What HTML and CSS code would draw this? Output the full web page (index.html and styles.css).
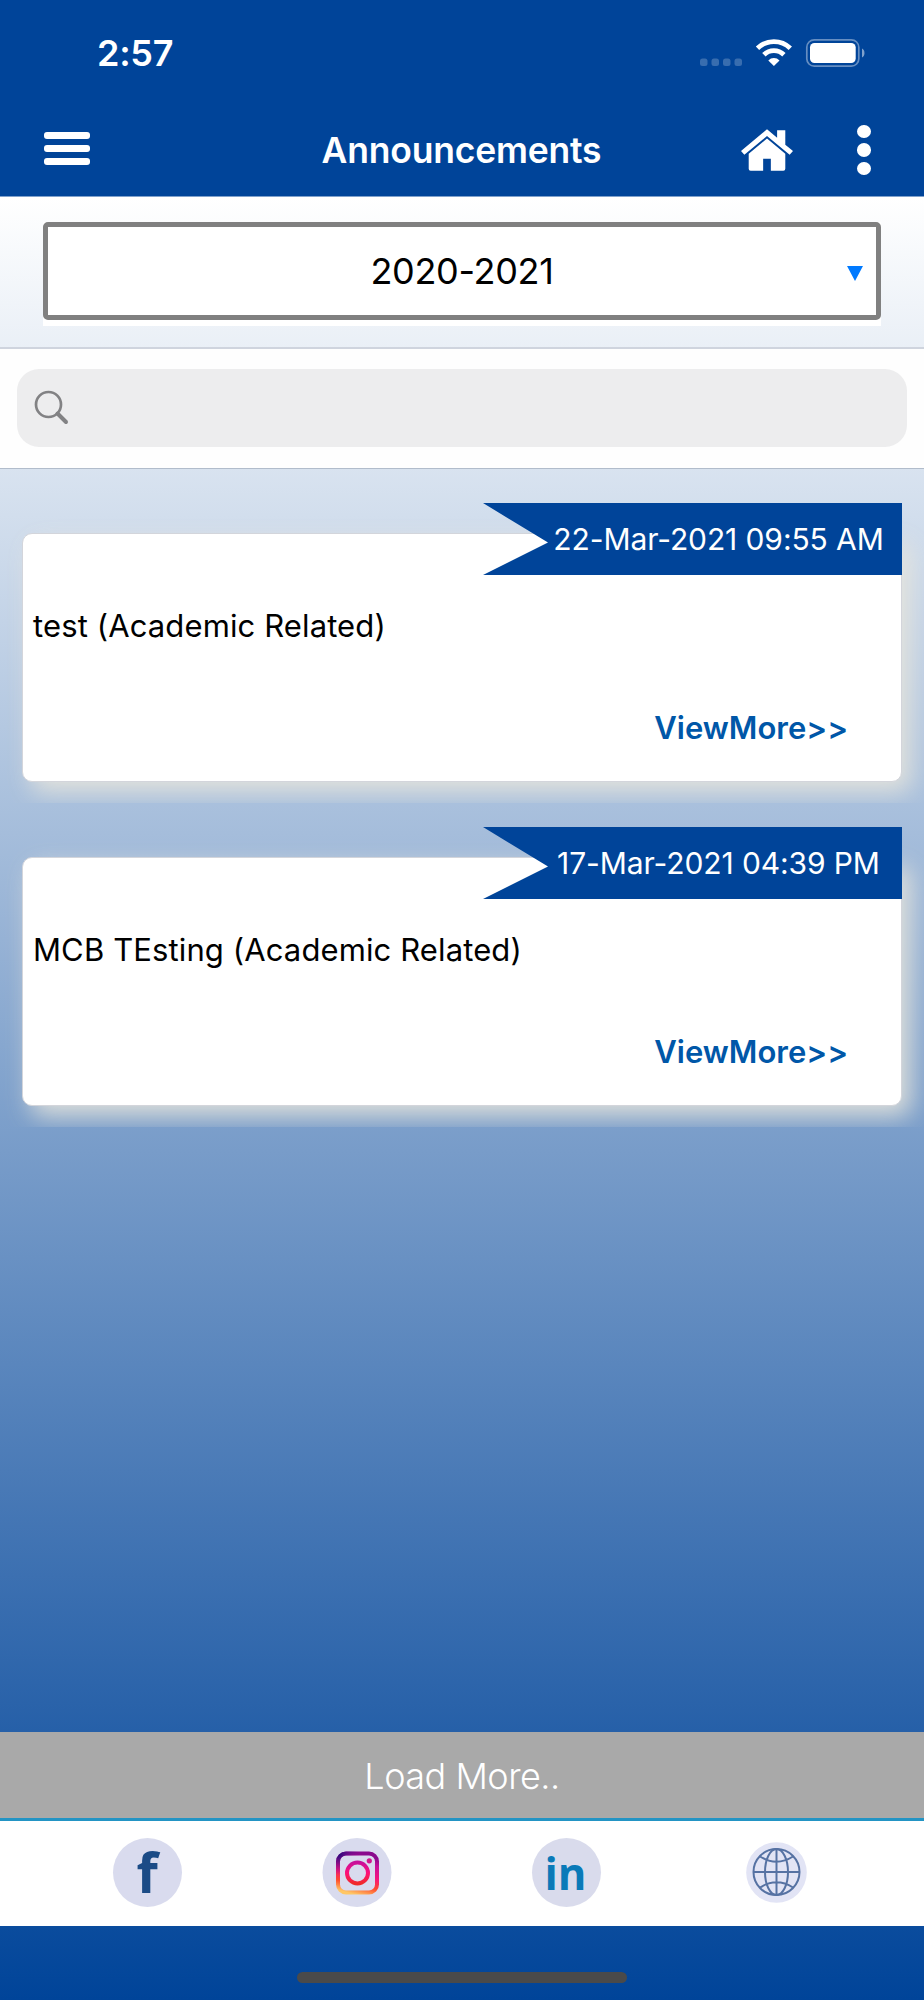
FILE: index.html
```html
<!DOCTYPE html>
<html lang="en">
<head>
    <meta charset="UTF-8">
    <meta name="viewport" content="width=device-width, initial-scale=1.0">
    <title>Announcements</title>
    <link rel="stylesheet" href="styles.css">
</head>
<body>
    <div class="app">
        <header class="header">
            <div class="status-bar">
                <span class="time">2:57</span>
                <svg class="status-icons" width="170" height="32" viewBox="0 0 170 32">
                    <g fill="#fff" fill-opacity="0.22">
                        <rect x="5" y="21.500" width="7.500" height="7.500" rx="2.500"/>
                        <rect x="16.500" y="21.500" width="7.500" height="7.500" rx="2.500"/>
                        <rect x="28" y="21.500" width="7.500" height="7.500" rx="2.500"/>
                        <rect x="39.500" y="21.500" width="7.500" height="7.500" rx="2.500"/>
                    </g>
                    <g fill="none" stroke="#fff" stroke-width="4.800">
                        <path d="M62.500 11.300a23.500 23.500 0 0 1 32.800 0"/>
                        <path d="M68.900 17.800a14.300 14.300 0 0 1 20 0"/>
                    </g>
                    <path d="M78.900 29l-5.600-5.600a8 8 0 0 1 11.200 0z" fill="#fff"/>
                    <rect x="111.800" y="2.800" width="52" height="26.400" rx="7.500" fill="none" stroke="#fff" stroke-opacity="0.4" stroke-width="1.700"/>
                    <rect x="115" y="6" width="45.700" height="20" rx="4.500" fill="#fff"/>
                    <path d="M167 11.500c3.300 1.500 3.300 7.500 0 9z" fill="#fff" fill-opacity="0.5"/>
                </svg>
            </div>
            <div class="nav">
                <div class="menu"><span></span><span></span><span></span></div>
                <h1>Announcements</h1>
                <svg class="home" width="52" height="43" viewBox="0 0 54 44" fill="#fff">
                    <path d="M27 0L0 22.500l3.500 4L27 7l23.500 19.500 3.500-4-8-6.600V1h-8.500v7.700z"/>
                    <path d="M27 9.500L8 25.500V41q0 2 2 2h13V30.500h8V43h13q2 0 2-2V25.500z"/>
                </svg>
                <div class="more"><span></span><span></span><span></span></div>
            </div>
        </header>

        <div class="year">
            <div class="year-wrap">
                <div class="year-select">
                    <span>2020-2021</span>
                    <i class="arrow"></i>
                </div>
            </div>
        </div>

        <div class="search">
            <div class="search-box">
                <svg width="36" height="36" viewBox="0 0 36 36" fill="none" stroke="#828284">
                    <circle cx="14.500" cy="14.500" r="12.500" stroke-width="2.700"/>
                    <path d="M23.500 23.500l8.500 8.500" stroke-width="4" stroke-linecap="round"/>
                </svg>
            </div>
        </div>

        <main class="list">
            <div class="item">
                <div class="card">
                    <p class="card-title">test (Academic Related)</p>
                    <a class="view-more">ViewMore&gt;&gt;</a>
                </div>
                <div class="ribbon"><span>22-Mar-2021 09:55 AM</span></div>
            </div>
            <div class="item">
                <div class="card">
                    <p class="card-title">MCB TEsting (Academic Related)</p>
                    <a class="view-more">ViewMore&gt;&gt;</a>
                </div>
                <div class="ribbon"><span>17-Mar-2021 04:39 PM</span></div>
            </div>
        </main>

        <div class="load-more"><span>Load More..</span></div>

        <footer class="social">
            <svg width="69" height="69" viewBox="0 0 69 69">
                <circle cx="34.500" cy="34.500" r="34.500" fill="#d9dbee"/>
                <text class="logo-f" x="23.500" y="55">f</text>
            </svg>
            <svg width="69" height="69" viewBox="0 0 69 69">
                <defs>
                    <linearGradient id="insta" x1="0.250" y1="1" x2="0.500" y2="0">
                        <stop offset="0" stop-color="#ffc766"/>
                        <stop offset="0.250" stop-color="#ff4a2c"/>
                        <stop offset="0.500" stop-color="#f5157c"/>
                        <stop offset="0.800" stop-color="#c8109a"/>
                        <stop offset="1" stop-color="#8a0a8c"/>
                    </linearGradient>
                    <linearGradient id="instaRing" x1="0" y1="1" x2="0" y2="0">
                        <stop offset="0" stop-color="#f02a2a"/>
                        <stop offset="0.500" stop-color="#ff1078"/>
                        <stop offset="1" stop-color="#c8109a"/>
                    </linearGradient>
                    <radialGradient id="instaCorner" cx="0" cy="0" r="0.550">
                        <stop offset="0" stop-color="#1a0a78"/>
                        <stop offset="1" stop-color="#6a0a8c" stop-opacity="0"/>
                    </radialGradient>
                </defs>
                <circle cx="34" cy="34.500" r="34.500" fill="#d9dbee"/>
                <rect x="15" y="15.500" width="39" height="39" rx="8" fill="none" stroke="url(#insta)" stroke-width="4"/>
                <circle cx="34.500" cy="35" r="10.500" fill="none" stroke="url(#instaRing)" stroke-width="4"/>
                <rect x="15" y="15.500" width="39" height="39" rx="8" fill="none" stroke="url(#instaCorner)" stroke-width="4"/>
                <circle cx="46.300" cy="22.800" r="2.600" fill="#d3158c"/>
            </svg>
            <svg width="69" height="69" viewBox="0 0 69 69">
                <circle cx="34.500" cy="34.500" r="34.500" fill="#d9dbec"/>
                <text class="logo-in" x="12.500" y="52" textLength="42" lengthAdjust="spacingAndGlyphs">in</text>
            </svg>
            <svg width="69" height="69" viewBox="0 0 69 69">
                <circle cx="34.500" cy="34.500" r="30.300" fill="#e2e4f5"/>
                <g fill="none" stroke="#5672a3" stroke-width="2">
                    <circle cx="34.500" cy="34" r="23"/>
                    <ellipse cx="34.500" cy="34" rx="11.500" ry="23"/>
                    <path d="M34.500 11v46M11.500 34h46M18 18.500q16.500 10.500 33 0M18 49.500q16.500-10.500 33 0"/>
                </g>
            </svg>
        </footer>

        <div class="home-bar"><span></span></div>
    </div>
</body>
</html>
```

FILE: styles.css
```css
* {
    box-sizing: border-box;
}

body {
    margin: 0;
    font-family: Inter, "Liberation Sans", sans-serif;
    color: #000;
}

.app {
    width: 924px;
    height: 2000px;
    display: flex;
    flex-direction: column;
    overflow: hidden;
    background: linear-gradient(#fff 197px, #004499 2000px);
}

/* header */
.header {
    height: 197px;
    background-color: #004499;
    border-bottom: 1px solid #7fa1cc;
    color: #fff;
}

.status-bar {
    height: 105px;
    display: flex;
    justify-content: space-between;
    align-items: center;
    padding: 0 59px 0 97px;
}

.time {
    font-size: 36px;
    font-weight: 600;
    letter-spacing: -0.3px;
}

.nav {
    height: 90px;
    display: flex;
    align-items: center;
    padding: 0 53px 0 44px;
}

.menu {
    width: 46px;
    margin-top: -3px;
    display: flex;
    flex-direction: column;
    gap: 6px;
}

.menu span {
    height: 7px;
    border-radius: 3px;
    background-color: #fff;
}

.nav h1 {
    flex: 1;
    margin: 0;
    padding-left: 92px;
    text-align: center;
    font-size: 35.5px;
    font-weight: 600;
    letter-spacing: -0.2px;
    white-space: nowrap;
}

.more {
    width: 14px;
    margin-left: 64px;
    display: flex;
    flex-direction: column;
    gap: 5px;
}

.more span {
    height: 13.5px;
    border-radius: 50%;
    background-color: #fff;
}

/* year dropdown */
.year {
    height: 152px;
    padding: 25px 43px 0;
    border-bottom: 2px solid #cfd4de;
}

.year-wrap {
    height: 104px;
    background-color: #fff;
}

.year-select {
    height: 98px;
    display: flex;
    align-items: center;
    justify-content: center;
    position: relative;
    border: 5px solid #808080;
    border-radius: 5px;
    font-size: 36px;
    letter-spacing: -0.3px;
}

.arrow {
    position: absolute;
    right: 13px;
    top: 39px;
    border: 8.5px solid transparent;
    border-top: 15px solid #007aff;
    border-bottom: 0;
}

/* search */
.search {
    height: 120px;
    padding: 20px 17px 0;
    background-color: #fefefe;
    border-bottom: 1px solid #b1bccb;
}

.search-box {
    height: 78px;
    display: flex;
    align-items: center;
    padding-left: 17px;
    border-radius: 22px;
    background-color: #ededee;
}

/* announcements */
.list {
    flex: 1;
    padding-top: 10px;
}

.item {
    position: relative;
    height: 324px;
    padding: 54px 22px 21px;
    overflow: hidden;
}

.card {
    height: 249px;
    padding: 72px 53px 0 10px;
    display: flex;
    flex-direction: column;
    border: 1px solid #d3d5db;
    border-radius: 10px;
    background-color: #fff;
    box-shadow: 9px 10px 24px rgba(232, 230, 220, 0.9);
}

.card-title {
    margin: 0;
    font-size: 31px;
    line-height: 40px;
    letter-spacing: 0.12px;
}

.view-more {
    align-self: flex-end;
    margin-top: 62px;
    font-size: 31px;
    line-height: 40px;
    font-weight: 600;
    color: #0057a8;
}

.ribbon {
    position: absolute;
    top: 24px;
    right: 22px;
    width: 419px;
    height: 72px;
    padding-left: 52px;
    display: flex;
    align-items: center;
    justify-content: center;
    background-color: #004499;
    clip-path: polygon(0 0, 100% 0, 100% 100%, 0 100%, 65px 55%);
    color: #fff;
    font-size: 30px;
    letter-spacing: -0.1px;
    white-space: nowrap;
}

/* bottom */
.load-more {
    height: 89px;
    padding-top: 2px;
    display: flex;
    align-items: center;
    justify-content: center;
    background-color: #a9a9a9;
    border-bottom: 3px solid #2394c4;
    color: #fff;
    font-size: 36px;
    font-weight: 300;
    letter-spacing: -0.5px;
}

.social {
    height: 105px;
    display: flex;
    align-items: center;
    justify-content: space-between;
    padding: 0 113.5px 2px 113px;
    background-color: #fff;
}

.social svg {
    overflow: visible;
}

.logo-f {
    font-family: "Open Sans", sans-serif;
    font-size: 55px;
    font-weight: 700;
    fill: #1b4b86;
}

.logo-in {
    font-family: "Open Sans", sans-serif;
    font-size: 45px;
    font-weight: 700;
    fill: #0a7ab8;
}

.home-bar {
    height: 74px;
    padding-top: 46px;
}

.home-bar span {
    display: block;
    width: 330px;
    height: 11px;
    margin: 0 auto;
    border-radius: 6px;
    background-color: #4a4a4a;
}
```
